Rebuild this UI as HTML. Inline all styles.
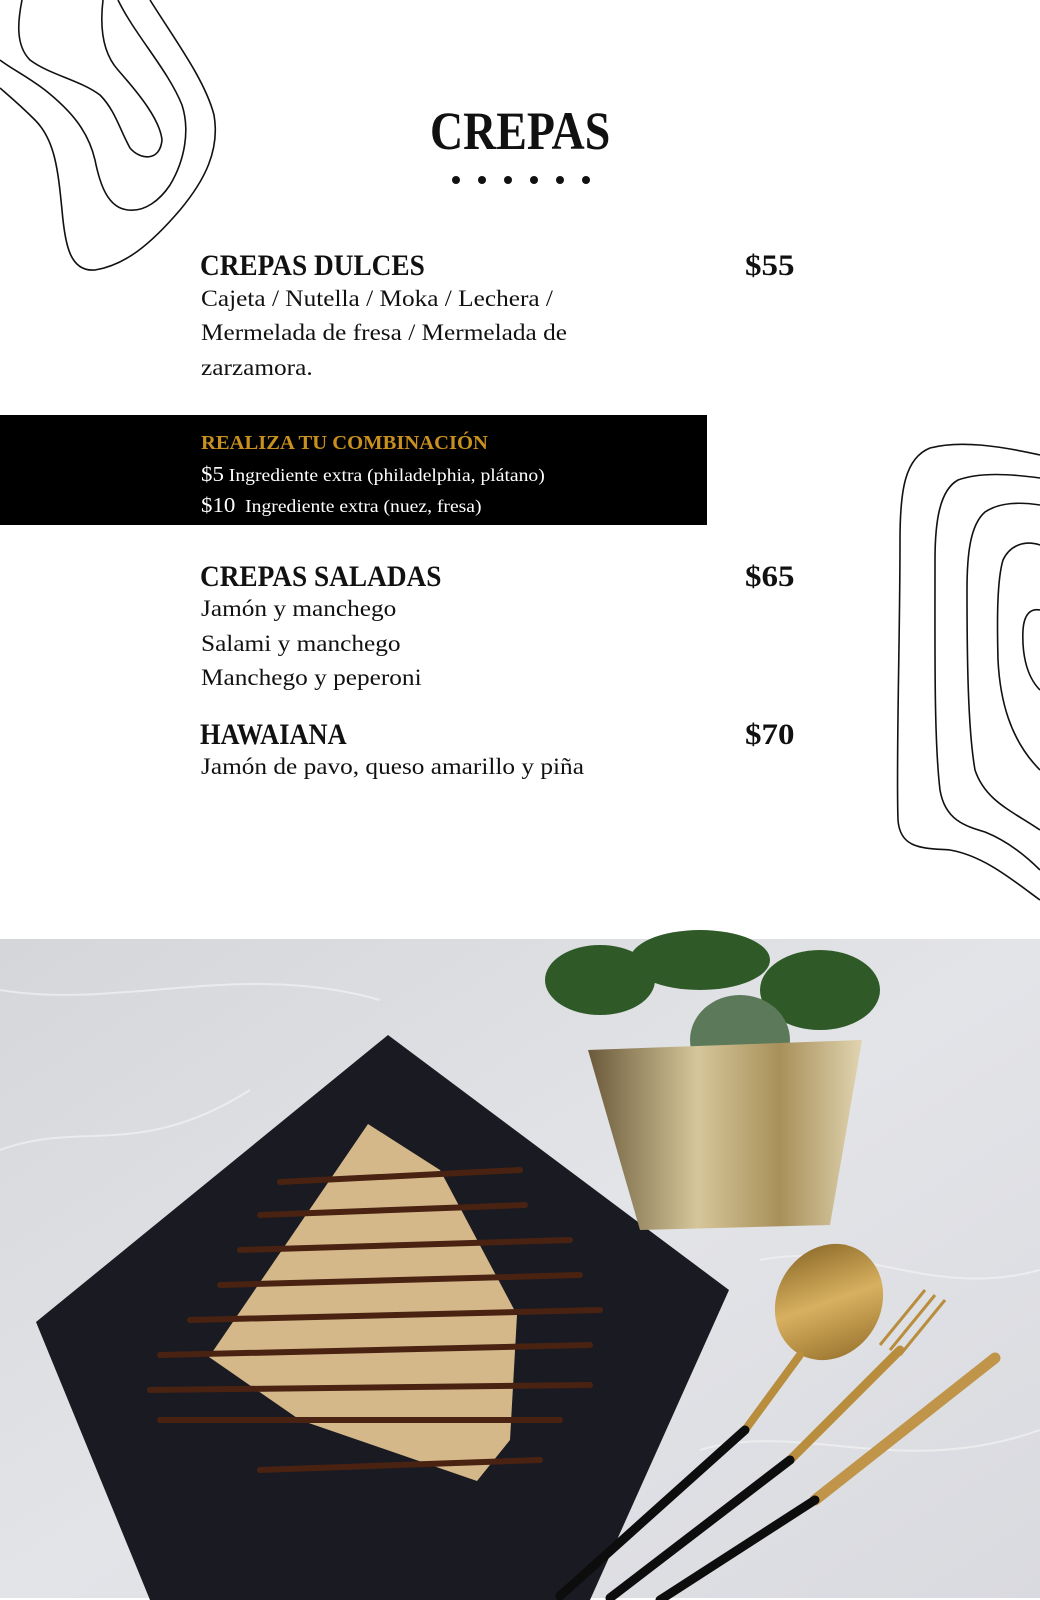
<!DOCTYPE html>
<html><head><meta charset="utf-8"><style>
html,body{margin:0;padding:0;background:#fff;}
body{width:1040px;height:1600px;position:relative;overflow:hidden;font-family:"Liberation Serif",serif;color:#111;}
.a{position:absolute;white-space:nowrap;}
.h{font-weight:bold;transform:scaleX(.91);transform-origin:left top;}
.p{font-weight:bold;transform:scaleX(1.1);transform-origin:left top;}
.d{font-size:23px;transform:scaleX(1.1);transform-origin:left top;}
.dot{position:absolute;width:8px;height:8px;border-radius:50%;background:#111;top:176px;}
</style></head><body>
<svg class="a" style="left:0;top:0" width="1040" height="1600" viewBox="0 0 1040 1600">
<g fill="none" stroke="#111" stroke-width="1.6">
<path d="M150,0 C175,40 205,80 214,115 C220,150 205,180 180,210 C150,245 125,265 95,270 C70,272 65,245 62,210 C58,170 55,140 35,120 C20,105 8,95 0,88"/>
<path d="M118,0 C135,35 168,70 182,105 C190,130 185,160 170,185 C160,200 145,212 128,210 C108,208 100,185 95,160 C88,130 70,110 45,90 C25,75 10,68 0,60"/>
<path d="M22,0 C18,20 15,45 30,60 C50,75 80,80 100,95 C115,110 120,130 130,148 C140,160 160,162 162,140 C160,120 140,95 118,70 C102,52 100,25 103,0"/>
</g>
<g fill="none" stroke="#111" stroke-width="1.6">
<path d="M1040,455 C1000,446 960,440 930,448 C905,458 900,490 900,540 C900,640 896,760 898,820 C900,850 925,848 950,850 C985,856 1015,882 1040,900"/>
<path d="M1040,478 C1010,474 980,472 958,480 C940,490 935,520 935,560 C935,650 934,740 940,790 C945,820 965,826 985,832 C1010,842 1028,858 1040,870"/>
<path d="M1040,505 C1020,502 1000,502 985,512 C970,525 967,555 967,590 C967,660 968,730 975,770 C985,800 1010,810 1040,830"/>
<path d="M1040,545 C1025,540 1010,545 1003,560 C997,580 997,620 998,660 C1000,700 1010,740 1040,770"/>
<path d="M1040,610 C1030,608 1024,615 1023,630 C1022,650 1025,675 1040,690"/>
</g>
<defs>
<linearGradient id="mb" x1="0" y1="0" x2="1" y2="1"><stop offset="0" stop-color="#d4d6da"/><stop offset=".5" stop-color="#e3e4e8"/><stop offset="1" stop-color="#d9dadf"/></linearGradient>
<linearGradient id="gd" x1="0" y1="0" x2="1" y2="1"><stop offset="0" stop-color="#7a5a1c"/><stop offset=".5" stop-color="#d8b060"/><stop offset="1" stop-color="#8a6522"/></linearGradient>
<linearGradient id="pot" x1="0" y1="0" x2="1" y2="0"><stop offset="0" stop-color="#6a5a3a"/><stop offset=".4" stop-color="#d6c69a"/><stop offset=".7" stop-color="#a8905a"/><stop offset="1" stop-color="#e0d4b0"/></linearGradient>
</defs>
<rect x="0" y="939" width="1040" height="659" fill="url(#mb)"/>
<g stroke="#f2f2f4" stroke-width="2" fill="none" opacity=".7">
<path d="M0,990 C120,1010 240,960 380,1000"/><path d="M0,1150 C80,1120 140,1160 250,1090"/><path d="M760,1260 C860,1240 930,1300 1040,1270"/><path d="M700,1450 C800,1420 900,1480 1040,1430"/>
</g>
<polygon points="388,1035 729,1290 590,1600 150,1600 36,1322" fill="#191a22"/>
<polygon points="368,1124 440,1170 517,1315 510,1440 477,1481 300,1420 209,1357" fill="#d5b88a"/>
<g stroke="#4a2212" stroke-width="6" fill="none" stroke-linecap="round">
<path d="M280,1182 L520,1170"/><path d="M260,1215 L525,1205"/><path d="M240,1250 L570,1240"/><path d="M220,1285 L580,1275"/><path d="M190,1320 L600,1310"/><path d="M160,1355 L590,1345"/><path d="M150,1390 L590,1385"/><path d="M160,1420 L560,1420"/><path d="M260,1470 L540,1460"/>
</g>
<g fill="#2f5a28"><ellipse cx="600" cy="980" rx="55" ry="35"/><ellipse cx="700" cy="960" rx="70" ry="30"/><ellipse cx="820" cy="990" rx="60" ry="40"/><ellipse cx="740" cy="1040" rx="50" ry="45" fill="#5c7a5a"/></g>
<polygon points="588,1050 862,1040 830,1225 640,1230" fill="url(#pot)"/>
<ellipse cx="829" cy="1302" rx="52" ry="60" transform="rotate(30 829 1302)" fill="url(#gd)"/>
<g stroke-linecap="round">
<line x1="800" y1="1355" x2="745" y2="1430" stroke="#b88e3e" stroke-width="8"/>
<line x1="745" y1="1430" x2="560" y2="1596" stroke="#0d0d0d" stroke-width="9"/>
<line x1="900" y1="1350" x2="790" y2="1460" stroke="#b88e3e" stroke-width="9"/>
<line x1="790" y1="1460" x2="610" y2="1598" stroke="#0d0d0d" stroke-width="9"/>
<line x1="995" y1="1358" x2="815" y2="1500" stroke="#c0954a" stroke-width="11"/>
<line x1="815" y1="1500" x2="660" y2="1600" stroke="#0d0d0d" stroke-width="9"/>
</g>
<g stroke="#b88e3e" stroke-width="3"><line x1="880" y1="1345" x2="925" y2="1290"/><line x1="890" y1="1350" x2="935" y2="1295"/><line x1="900" y1="1355" x2="945" y2="1300"/></g>
<rect x="0" y="415" width="707" height="110" fill="#000"/>
</svg>

<div class="a h" style="left:430px;top:100px;font-size:54px;transform:scaleX(.85)">CREPAS</div>
<div class="dot" style="left:452px"></div><div class="dot" style="left:478px"></div><div class="dot" style="left:504px"></div><div class="dot" style="left:530px"></div><div class="dot" style="left:556px"></div><div class="dot" style="left:582px"></div>

<div class="a h" style="left:200px;top:249px;font-size:30px">CREPAS DULCES</div>
<div class="a p" style="left:745px;top:249px;font-size:30px">$55</div>
<div class="a d" style="left:201px;top:286px">Cajeta / Nutella / Moka / Lechera /</div>
<div class="a d" style="left:201px;top:320px">Mermelada de fresa / Mermelada de</div>
<div class="a d" style="left:201px;top:355px">zarzamora.</div>

<div class="a h" style="left:201px;top:432px;font-size:20px;color:#c8901e;transform:scaleX(1.03)">REALIZA TU COMBINACIÓN</div>
<div class="a" style="left:201px;top:462px;font-size:18px;color:#fff;transform:scaleX(1.09);transform-origin:left top"><span style="font-size:21px">$5</span> Ingrediente extra (philadelphia, plátano)</div>
<div class="a" style="left:201px;top:493px;font-size:18px;color:#fff;transform:scaleX(1.09);transform-origin:left top"><span style="font-size:21px">$10</span>&nbsp; Ingrediente extra (nuez, fresa)</div>

<div class="a h" style="left:200px;top:560px;font-size:30px">CREPAS SALADAS</div>
<div class="a p" style="left:745px;top:560px;font-size:30px">$65</div>
<div class="a d" style="left:201px;top:596px">Jamón y manchego</div>
<div class="a d" style="left:201px;top:631px">Salami y manchego</div>
<div class="a d" style="left:201px;top:665px">Manchego y peperoni</div>

<div class="a h" style="left:200px;top:718px;font-size:30px;transform:scaleX(.88)">HAWAIANA</div>
<div class="a p" style="left:745px;top:718px;font-size:30px">$70</div>
<div class="a d" style="left:201px;top:754px">Jamón de pavo, queso amarillo y piña</div>
</body></html>
